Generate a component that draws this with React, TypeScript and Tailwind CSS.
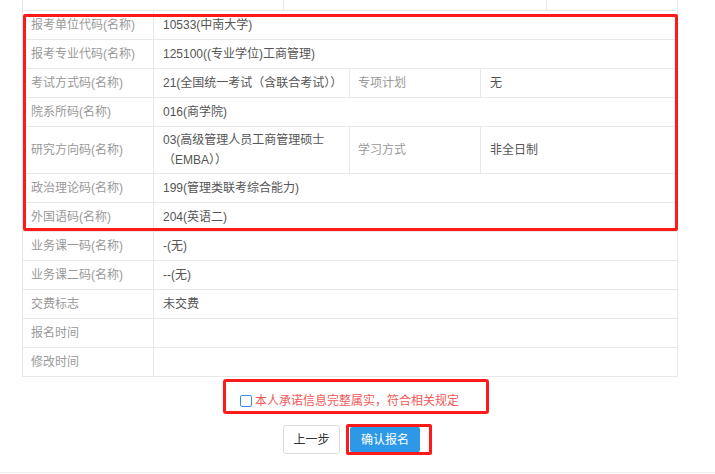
import React from 'react';

const font = { fontFamily: '"Liberation Sans", "Noto Sans CJK SC", sans-serif' };

type Cell = { label: string; value: React.ReactNode };

const rows: { cells: Cell[]; tall?: boolean }[] = [
  { cells: [{ label: '报考单位代码(名称)', value: '10533(中南大学)' }] },
  { cells: [{ label: '报考专业代码(名称)', value: '125100((专业学位)工商管理)' }] },
  {
    cells: [
      { label: '考试方式码(名称)', value: '21(全国统一考试（含联合考试））' },
      { label: '专项计划', value: '无' },
    ],
  },
  { cells: [{ label: '院系所码(名称)', value: '016(商学院)' }] },
  {
    tall: true,
    cells: [
      {
        label: '研究方向码(名称)',
        value: (
          <>
            03(高级管理人员工商管理硕士
            <br />
            （EMBA））
          </>
        ),
      },
      { label: '学习方式', value: '非全日制' },
    ],
  },
  { cells: [{ label: '政治理论码(名称)', value: '199(管理类联考综合能力)' }] },
  { cells: [{ label: '外国语码(名称)', value: '204(英语二)' }] },
  { cells: [{ label: '业务课一码(名称)', value: '-(无)' }] },
  { cells: [{ label: '业务课二码(名称)', value: '--(无)' }] },
  { cells: [{ label: '交费标志', value: '未交费' }] },
  { cells: [{ label: '报名时间', value: '' }] },
  { cells: [{ label: '修改时间', value: '' }] },
];

function Row({ cells, tall }: { cells: Cell[]; tall?: boolean }) {
  return (
    <div className={`flex border-b border-[#e8e8e8] ${tall ? 'h-[47px]' : 'h-[29px]'}`}>
      {cells.map((c, i) => (
        <React.Fragment key={i}>
          <div className="w-[131px] shrink-0 flex items-center pl-[8px] border-r border-[#e8e8e8] text-[#999]">
            {c.label}
          </div>
          <div
            className={`flex items-center pl-[9px] text-[#555] leading-[20px] ${
              cells.length > 1 && i === 0 ? 'w-[196px] shrink-0 border-r border-[#e8e8e8]' : 'flex-1'
            }`}
          >
            <span>{c.value}</span>
          </div>
        </React.Fragment>
      ))}
    </div>
  );
}

export default function App() {
  return (
    <div className="w-[715px] h-[474px] bg-white text-[12px] relative overflow-hidden" style={font}>
      <div className="ml-[22px] w-[656px] border-x border-[#e8e8e8]">
        <div className="flex h-[11px] border-b border-[#e8e8e8]">
          <div className="w-[261px] border-r border-[#e8e8e8]" />
          <div className="w-[263px] border-r border-[#e8e8e8]" />
          <div className="flex-1" />
        </div>
        {rows.map((r, i) => (
          <Row key={i} cells={r.cells} tall={r.tall} />
        ))}
      </div>

      <div className="flex justify-center mt-[2px]">
        <div className="ml-[-3px] w-[266px] h-[35px] border-[3px] border-[#ff1a1a] rounded-[3px] flex items-center pl-[14px] pt-[8px]">
          <span className="w-[12px] h-[12px] border border-[#3a8ee6] rounded-[2px] mr-[3px]" />
          <span className="text-[#f25757]">本人承诺信息完整属实，符合相关规定</span>
        </div>
      </div>

      <div className="flex justify-center items-center mt-[10px] gap-[6px]">
        <button className="w-[57px] h-[29px] border border-[#ddd] rounded-[3px] bg-white text-[#333] text-[12px]">
          上一步
        </button>
        <div className="h-[31px] w-[86px] border-[3px] border-[#ff1a1a] rounded-[2px] flex items-center pl-[1px]">
          <button className="w-[70px] h-[25px] bg-[#2d98e6] text-white text-[12px] rounded-[2px]">
            确认报名
          </button>
        </div>
      </div>

      <div className="absolute left-[23px] top-[14px] w-[655px] h-[217px] border-[3px] border-[#ff1a1a] rounded-[2px] pointer-events-none" />

      <div className="absolute left-0 right-0 top-[472px] border-t border-[#ececec]" />
    </div>
  );
}
